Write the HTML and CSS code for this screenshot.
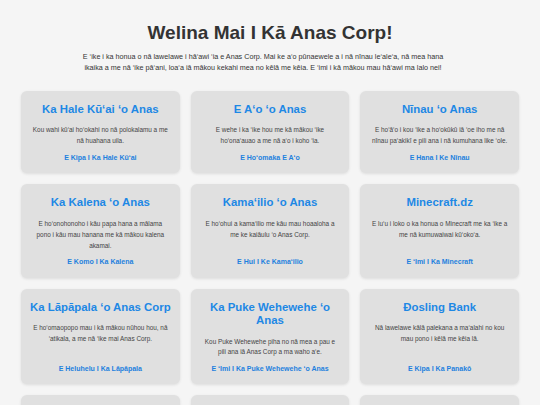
FILE: index.html
```html
<!DOCTYPE html>
<html lang="haw">
<head>
<meta charset="utf-8">
<title>Anas Corp</title>
<link rel="stylesheet" href="styles.css">
</head>
<body>
<header class="hero">
  <h1 class="hero-title">Welina Mai I Kā Anas Corp!</h1>
  <p class="hero-text">E ‘ike i ka honua o nā lawelawe i hā‘awi ‘ia e Anas Corp. Mai ke a‘o pūnaewele a i nā nīnau le‘ale‘a, nā mea hana ikaika a me nā ‘ike pā‘ani, loa‘a iā mākou kekahi mea no kēlā me kēia. E ‘imi i kā mākou mau hā‘awi ma lalo nei!</p>
</header>
<main class="grid">
  <section class="card">
    <h2 class="card-title">Ka Hale Kū‘ai ‘o Anas</h2>
    <p class="card-text">Kou wahi kū‘ai ho‘okahi no nā polokalamu a me<br>nā huahana uila.</p>
    <a class="card-link" href="#">E Kipa I Ka Hale Kū‘ai</a>
  </section>
  <section class="card">
    <h2 class="card-title">E A‘o ‘o Anas</h2>
    <p class="card-text">E wehe i ka ‘ike hou me kā mākou ‘ike<br>ho‘ona‘auao a me nā a‘o i koho ‘ia.</p>
    <a class="card-link" href="#">E Ho‘omaka E A‘o</a>
  </section>
  <section class="card">
    <h2 class="card-title">Nīnau ‘o Anas</h2>
    <p class="card-text">E ho‘ā‘o i kou ‘ike a ho‘okūkū iā ‘oe iho me nā<br>nīnau pa‘akikī e pili ana i nā kumuhana like ‘ole.</p>
    <a class="card-link" href="#">E Hana I Ke Nīnau</a>
  </section>
  <section class="card">
    <h2 class="card-title">Ka Kalena ‘o Anas</h2>
    <p class="card-text">E ho‘onohonoho i kāu papa hana a mālama<br>pono i kāu mau hanana me kā mākou kalena<br>akamai.</p>
    <a class="card-link" href="#">E Komo I Ka Kalena</a>
  </section>
  <section class="card">
    <h2 class="card-title">Kama‘ilio ‘o Anas</h2>
    <p class="card-text">E ho‘ohui a kama‘ilio me kāu mau hoaaloha a<br>me ke kaiāulu ‘o Anas Corp.</p>
    <a class="card-link" href="#">E Hui I Ke Kama‘ilio</a>
  </section>
  <section class="card">
    <h2 class="card-title">Minecraft.dz</h2>
    <p class="card-text">E lu‘u i loko o ka honua o Minecraft me ka ‘ike a<br>me nā kumuwaiwai kū‘oko‘a.</p>
    <a class="card-link" href="#">E ‘Imi I Ka Minecraft</a>
  </section>
  <section class="card">
    <h2 class="card-title">Ka Lāpāpala ‘o Anas Corp</h2>
    <p class="card-text">E ho‘omaopopo mau i kā mākou nūhou hou, nā<br>‘atikala, a me nā ‘ike mai Anas Corp.</p>
    <a class="card-link" href="#">E Heluhelu I Ka Lāpāpala</a>
  </section>
  <section class="card">
    <h2 class="card-title">Ka Puke Wehewehe ‘o Anas</h2>
    <p class="card-text">Kou Puke Wehewehe piha no nā mea a pau e<br>pili ana iā Anas Corp a ma waho a‘e.</p>
    <a class="card-link" href="#">E ‘Imi I Ka Puke Wehewehe ‘o Anas</a>
  </section>
  <section class="card">
    <h2 class="card-title">Đosling Bank</h2>
    <p class="card-text">Nā lawelawe kālā palekana a ma‘alahi no kou<br>mau pono i kēlā me kēia lā.</p>
    <a class="card-link" href="#">E Kipa I Ka Panakō</a>
  </section>
  <section class="card">
    <h2 class="card-title">Ka Pā‘ani ‘o Anas</h2>
    <p class="card-text">E pā‘ani i nā pā‘ani le‘ale‘a me kāu mau hoaaloha.</p>
    <a class="card-link" href="#">E Pā‘ani</a>
  </section>
  <section class="card">
    <h2 class="card-title">Ke Kōkua ‘o Anas</h2>
    <p class="card-text">E loa‘a ke kōkua no nā nīnau a pau.</p>
    <a class="card-link" href="#">E Noi I Ke Kōkua</a>
  </section>
  <section class="card">
    <h2 class="card-title">Ka Mo‘olelo ‘o Anas</h2>
    <p class="card-text">E heluhelu i ka mo‘olelo o Anas Corp.</p>
    <a class="card-link" href="#">E Heluhelu</a>
  </section>
</main>
</body>
</html>
```
FILE: styles.css
```css
* { box-sizing: border-box; }

body {
  margin: 0;
  background: #f5f5f5;
  font-family: "Liberation Sans", Arial, sans-serif;
  color: #333;
}

.hero {
  padding-top: 22px;
  text-align: center;
}

.hero-title {
  margin: 0;
  font-size: 19px;
  line-height: 22px;
  font-weight: bold;
  color: #333;
}

.hero-text {
  max-width: 376px;
  margin: 7px auto 0;
  padding-right: 14px;
  font-size: 7.2px;
  line-height: 11.3px;
  color: #333;
}

.grid {
  width: 498px;
  margin: 17px auto 0;
  display: grid;
  grid-template-columns: repeat(3, 1fr);
  column-gap: 11px;
  row-gap: 11px;
}

.card {
  display: flex;
  flex-direction: column;
  align-items: center;
  text-align: center;
  background: #e0e0e0;
  border-radius: 6px;
  box-shadow: 0 1px 3px rgba(0, 0, 0, 0.1);
  padding: 12px 6px 10.5px;
}

.card-title {
  margin: 0;
  font-size: 11.4px;
  line-height: 13.3px;
  font-weight: bold;
  color: #1e88e5;
}

.card-text {
  margin: 9.5px 0 0;
  font-size: 6.4px;
  line-height: 10.8px;
  color: #444;
}

.card-link {
  margin-top: auto;
  padding-top: 4.7px;
  font-size: 7px;
  line-height: 11px;
  font-weight: bold;
  color: #1e80de;
  text-decoration: none;
}
```
